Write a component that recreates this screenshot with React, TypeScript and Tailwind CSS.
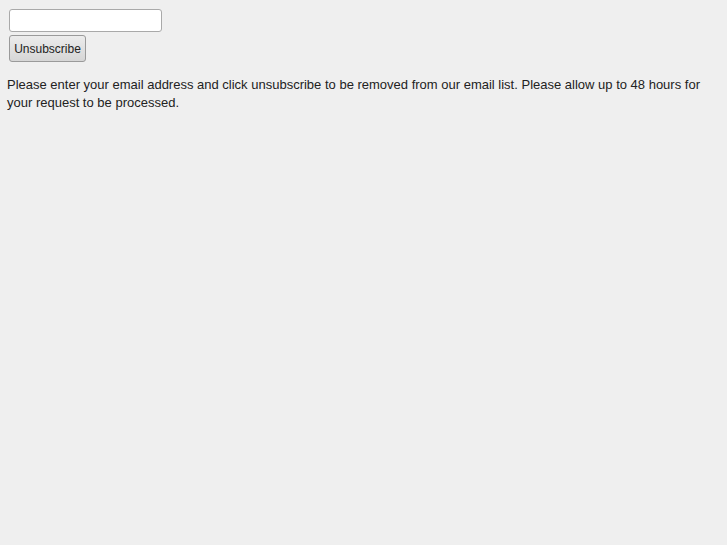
import React from 'react';

const App: React.FC = () => {
  return (
    <div className="min-h-[545px] bg-[#efefef] px-[7px] pt-[9px] text-[13px] leading-[18px] text-[#222] font-['Liberation_Sans',Arial,sans-serif]">
      <form className="flex flex-col items-start gap-[3px] pl-[2px]" onSubmit={(e) => e.preventDefault()}>
        <input
          type="text"
          className="w-[153px] h-[23px] bg-white border border-[#a9a9a9] rounded-[3px] px-1 outline-none"
        />
        <button
          type="submit"
          className="h-[27px] w-[77px] rounded-[3px] border border-[#9a9a9a] bg-gradient-to-b from-[#ececec] to-[#d6d6d6] text-[12px] text-[#222]"
        >
          Unsubscribe
        </button>
      </form>
      <p className="mt-[14px] pr-[20px]">
        Please enter your email address and click unsubscribe to be removed from our email list. Please allow up to 48 hours for your request to be processed.
      </p>
    </div>
  );
};

export default App;
